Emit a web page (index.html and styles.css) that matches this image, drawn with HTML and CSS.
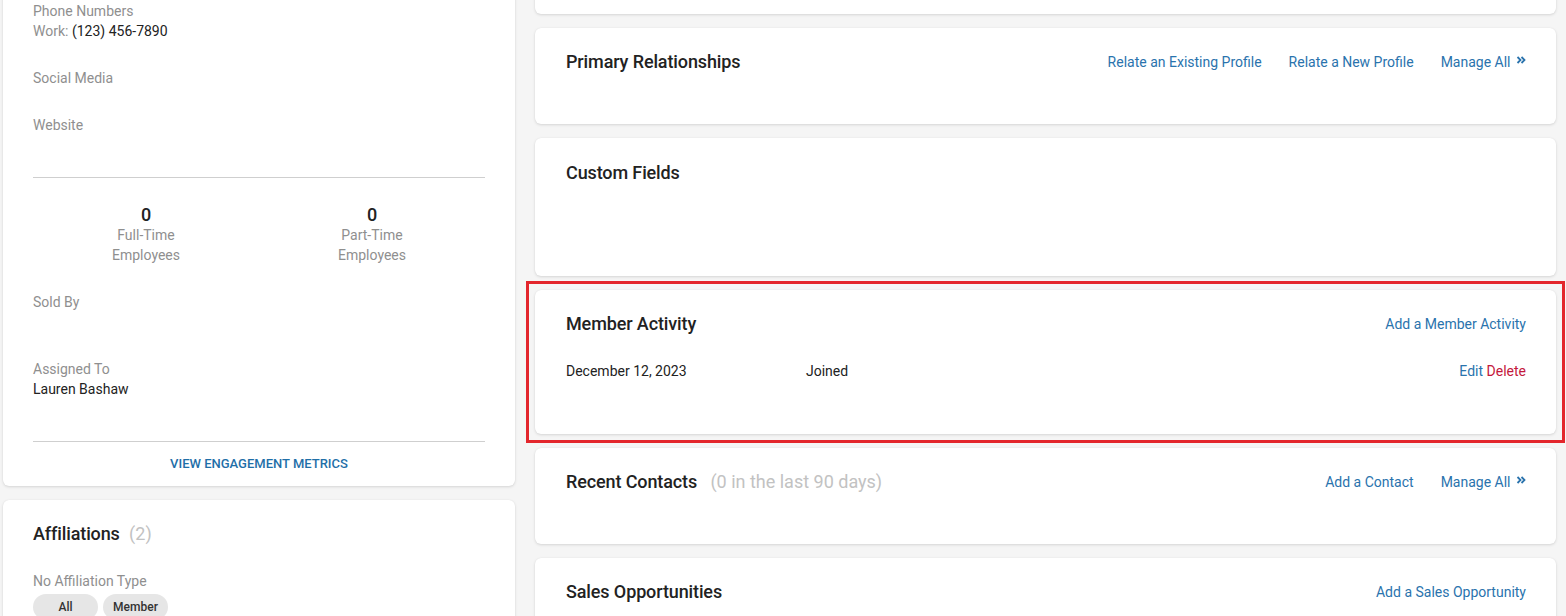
FILE: index.html
```html
<!DOCTYPE html>
<html lang="en">
<head>
<meta charset="utf-8">
<title>Profile</title>
<link rel="stylesheet" href="styles.css">
</head>
<body>
<div class="page">
  <div class="col col-left">
    <section class="card info-card">
      <div class="field">
        <div class="label">Phone Numbers</div>
        <div class="value"><span class="label">Work:</span> (123) 456-7890</div>
      </div>
      <div class="field">
        <div class="label">Social Media</div>
      </div>
      <div class="field field-last">
        <div class="label">Website</div>
      </div>
      <hr class="divider divider-a">
      <div class="stats">
        <div class="stat">
          <div class="stat-num">0</div>
          <div class="label">Full-Time<br>Employees</div>
        </div>
        <div class="stat">
          <div class="stat-num">0</div>
          <div class="label">Part-Time<br>Employees</div>
        </div>
      </div>
      <div class="field field-sold">
        <div class="label">Sold By</div>
        <div class="value empty"></div>
      </div>
      <div class="field field-last">
        <div class="label">Assigned To</div>
        <div class="value">Lauren Bashaw</div>
      </div>
      <hr class="divider divider-b">
      <a class="metrics-link" href="#">VIEW ENGAGEMENT METRICS</a>
    </section>

    <section class="card aff-card">
      <div class="card-head">
        <h2 class="card-title">Affiliations <span class="muted">(2)</span></h2>
      </div>
      <div class="aff-type label">No Affiliation Type</div>
      <div class="pills">
        <span class="pill">All</span>
        <span class="pill">Member</span>
      </div>
    </section>
  </div>

  <div class="col col-right">
    <section class="card stub-card"></section>

    <section class="card card-h96">
      <div class="card-head">
        <h2 class="card-title">Primary Relationships</h2>
        <nav class="actions">
          <a href="#">Relate an Existing Profile</a>
          <a href="#">Relate a New Profile</a>
          <a href="#" class="manage">Manage All <svg class="chev" viewBox="0 0 10 8" width="10" height="8"><path d="M1.5 1 L4.5 4 L1.5 7 M5.5 1 L8.5 4 L5.5 7" fill="none" stroke="currentColor" stroke-width="1.8"/></svg></a>
        </nav>
      </div>
    </section>

    <section class="card card-h138 card-custom">
      <div class="card-head">
        <h2 class="card-title">Custom Fields</h2>
      </div>
    </section>

    <section class="card card-h144 highlighted">
      <div class="card-head">
        <h2 class="card-title">Member Activity</h2>
        <nav class="actions">
          <a href="#">Add a Member Activity</a>
        </nav>
      </div>
      <div class="activity-row">
        <span class="act-date">December 12, 2023</span>
        <span class="act-type">Joined</span>
        <span class="act-ops"><a href="#">Edit</a> <a href="#" class="danger">Delete</a></span>
      </div>
    </section>

    <section class="card card-h96">
      <div class="card-head">
        <h2 class="card-title">Recent Contacts <span class="muted muted-wide">(0 in the last 90 days)</span></h2>
        <nav class="actions">
          <a href="#">Add a Contact</a>
          <a href="#" class="manage">Manage All <svg class="chev" viewBox="0 0 10 8" width="10" height="8"><path d="M1.5 1 L4.5 4 L1.5 7 M5.5 1 L8.5 4 L5.5 7" fill="none" stroke="currentColor" stroke-width="1.8"/></svg></a>
        </nav>
      </div>
    </section>

    <section class="card card-h96">
      <div class="card-head">
        <h2 class="card-title">Sales Opportunities</h2>
        <nav class="actions">
          <a href="#">Add a Sales Opportunity</a>
        </nav>
      </div>
    </section>
  </div>
</div>
</body>
</html>
```

FILE: styles.css
```css
* { box-sizing: border-box; }

html, body {
  margin: 0;
  padding: 0;
  background: #f5f5f5;
  font-family: Roboto, "Liberation Sans", Arial, sans-serif;
  font-size: 14px;
  line-height: 20px;
  color: #222;
  overflow: hidden;
}

.page {
  display: grid;
  grid-template-columns: 512px 1fr;
  column-gap: 20px;
  padding: 0 10px 0 3px;
  margin-top: -30px;
  align-items: start;
}

.col {
  display: flex;
  flex-direction: column;
  gap: 14px;
}

.card {
  position: relative;
  background: #fff;
  border-radius: 6px;
  box-shadow: 0 1px 3px rgba(0, 0, 0, 0.13), 0 0 1px rgba(0, 0, 0, 0.08);
  padding: 23px 30px 0 31px;
}

/* left info card */
.info-card {
  padding: 31px 30px 12px 30px;
}

.label { color: #8f8f8f; }
.value { color: #222; }
.value.empty { min-height: 20px; }

.field { margin-bottom: 27px; }
.field-last { margin-bottom: 0; }

.divider {
  border: 0;
  border-top: 1px solid #cfcfcf;
  margin: 0;
}
.divider-a { margin-top: 42px; }
.divider-b { margin-top: 42px; }

.stats {
  display: grid;
  grid-template-columns: 1fr 1fr;
  margin-top: 27px;
  text-align: center;
}
.stat-num {
  font-size: 18px;
  font-weight: 500;
  color: #222;
  line-height: 20px;
}
.stat .label { line-height: 20px; }

.field-sold { margin-top: 27px; }

.metrics-link {
  display: block;
  margin-top: 12px;
  text-align: center;
  font-size: 13px;
  font-weight: 500;
  color: #1f6fa8;
  text-decoration: none;
}

/* affiliations */
.aff-card { padding: 23px 30px 20px 30px; }
.aff-type { margin-top: 26px; }
.pills {
  display: flex;
  gap: 5px;
  margin-top: 3px;
}
.pill {
  display: inline-flex;
  align-items: center;
  justify-content: center;
  width: 65px;
  height: 26px;
  border-radius: 13px;
  background: #e6e6e6;
  font-size: 12px;
  font-weight: 500;
  color: #333;
}

/* right column */
.stub-card {
  height: 44px;
  padding: 0;
}

.card-h96 { min-height: 96px; }
.card-h138 { min-height: 138px; }
.card-h144 { min-height: 144px; }
.card-custom { padding-top: 24px; }

.card-head {
  display: flex;
  justify-content: space-between;
  align-items: center;
  height: 22px;
}

.card-title {
  margin: 0;
  font-size: 18px;
  font-weight: 500;
  line-height: 22px;
  letter-spacing: -0.12px;
  color: #222;
}

.muted {
  font-weight: 400;
  color: #c2c2c2;
  letter-spacing: 0;
  margin-left: 5px;
}
.muted-wide { margin-left: 9px; }

.actions {
  display: flex;
  gap: 27px;
  align-items: center;
}
.actions a,
.act-ops a {
  color: #2a73ad;
  text-decoration: none;
  font-size: 14px;
}
.manage .chev {
  vertical-align: 3px;
  margin-left: 2px;
}
.act-ops a.danger { color: #c4183c; }

.activity-row {
  display: flex;
  align-items: center;
  margin-top: 26px;
  line-height: 20px;
}
.act-date { width: 240px; }
.act-type { flex: 1; }
.act-ops { text-align: right; }

/* annotation box drawn over the highlighted card */
.highlighted::after {
  content: "";
  position: absolute;
  top: -9px;
  left: -9px;
  right: -9px;
  bottom: -9px;
  border: 3px solid #e3262c;
  pointer-events: none;
}
```
